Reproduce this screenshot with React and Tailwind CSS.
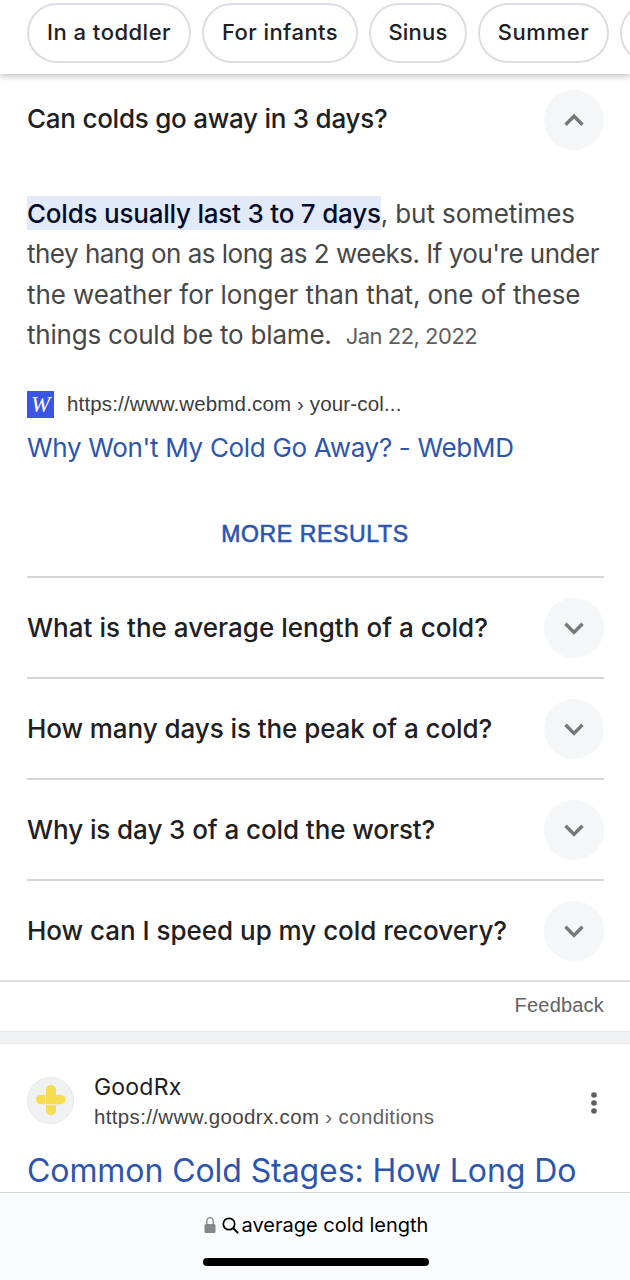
const CHIPS = [
  { label: "In a toddler", box: "w-[164px] tracking-[0.5px]" },
  { label: "For infants", box: "w-[156px] tracking-[0.42px]" },
  { label: "Sinus", box: "w-[98px] tracking-[0.2px]" },
  { label: "Summer", box: "w-[131px] tracking-[0.6px]" },
];

const QUESTIONS = [
  { text: "What is the average length of a cold?", tracking: "tracking-[0.03px]" },
  { text: "How many days is the peak of a cold?", tracking: "tracking-[-0.07px]" },
  { text: "Why is day 3 of a cold the worst?", tracking: "tracking-[-0.08px]" },
  { text: "How can I speed up my cold recovery?", tracking: "tracking-[-0.02px]" },
];

function ChevronButton({ up }) {
  return (
    <button className="flex size-[60px] shrink-0 items-center justify-center rounded-full bg-[#f5f6f8]">
      <svg width="24" height="24" viewBox="0 0 24 24" fill="none" stroke="#77787a" strokeWidth="3.4">
        <path d={up ? "M3.5 16.8 12 8.2l8.5 8.6" : "M3.5 7.8 12 16.4l8.5-8.6"} />
      </svg>
    </button>
  );
}

function Header() {
  return (
    <header className="relative z-10 flex h-[74px] shrink-0 gap-[11px] overflow-x-clip bg-white pt-[3px] pl-[27px] shadow-[0_2px_7px_rgba(0,0,0,0.27)]">
      {CHIPS.map((c) => (
        <div
          key={c.label}
          className={`flex h-[60px] shrink-0 items-center justify-center rounded-full border-2 border-[#dcdce2] pb-px text-[22px] font-medium whitespace-nowrap ${c.box}`}
        >
          {c.label}
        </div>
      ))}
      <div className="h-[60px] w-[120px] shrink-0 rounded-full border-2 border-[#dcdce2]" />
    </header>
  );
}

function Answer() {
  return (
    <section className="flex h-[502px] shrink-0 flex-col px-[27px] pt-[16px]">
      <div className="-mr-px flex h-[60px] items-center justify-between">
        <h2 className="pb-[3px] text-[26px] font-medium tracking-[-0.25px]">Can colds go away in 3 days?</h2>
        <ChevronButton up />
      </div>
      <div className="mt-[44px] text-[26px] leading-[40.4px] whitespace-nowrap text-[#474747]">
        <p className="tracking-[-0.1px]">
          <mark className="bg-[#e2eafa] pt-[2px] pb-[1px] font-medium tracking-[-0.22px] text-[#040c28]">
            Colds usually last 3 to 7 days
          </mark>
          , but sometimes
        </p>
        <p className="tracking-[-0.51px]">they hang on as long as 2 weeks. If you're under</p>
        <p className="tracking-[-0.08px]">the weather for longer than that, one of these</p>
        <p className="tracking-[-0.2px]">
          things could be to blame.
          <span className="ml-[14px] text-[22px] tracking-[-0.5px] text-[#5e5e5e]">Jan 22, 2022</span>
        </p>
      </div>
      <div className="mt-[34px] flex h-[27px] items-center gap-[13px]">
        <div className="flex size-[27px] items-center justify-center bg-[#3b55e6] font-['Liberation_Serif',serif] text-[23px] leading-none text-white italic">
          W
        </div>
        <span className="font-['Liberation_Sans',sans-serif] text-[20.5px] tracking-[0.15px] text-[#3c3c3c]">
          https://www.webmd.com › your-col...
        </span>
      </div>
      <a className="mt-[14px] h-[32px] text-[26px] leading-[32px] tracking-[-0.31px] text-[#2c55b0]">
        Why Won't My Cold Go Away? - WebMD
      </a>
      <a className="mt-[56px] text-center font-['Liberation_Sans',sans-serif] text-[23px] leading-[28px] tracking-[0.65px] text-[#2c55b0] [-webkit-text-stroke:0.6px_#2c55b0]">
        MORE RESULTS
      </a>
    </section>
  );
}

function GoodRxIcon() {
  return (
    <div className="mb-[4px] flex size-[47px] items-center justify-center rounded-full border border-[#e6e8ec] bg-[#f0f1f3]">
      <svg width="32" height="32" viewBox="0 0 32 32" fill="#f6dc50">
        <path d="M11 20.2V6a5 5 0 0 1 10 0v4.9h5a4.65 4.65 0 0 1 0 9.3z" />
        <path d="M10 10.9v9.3H5.6a4.65 4.65 0 0 1 0-9.3z" />
        <path d="M11 21.2h10v5a5 5 0 0 1-10 0z" />
      </svg>
    </div>
  );
}

export default function App() {
  return (
    <div className="flex h-[1280px] w-[630px] flex-col overflow-hidden bg-white font-[Inter,sans-serif] text-[#202022]">
      <Header />
      <Answer />
      <section className="shrink-0">
        {QUESTIONS.map((q) => (
          <div key={q.text} className="mr-[26px] ml-[27px] flex h-[101px] items-center justify-between border-t-2 border-[#d6d6d6] pt-px">
            <h3 className={`pb-[2px] text-[26px] font-medium whitespace-nowrap ${q.tracking}`}>{q.text}</h3>
            <ChevronButton />
          </div>
        ))}
        <div className="flex h-[51px] items-center justify-end border-t-2 border-[#dcdcde] pr-[26px] pb-[4px] font-['Liberation_Sans',sans-serif] text-[20px] tracking-[0.2px] text-[#626262]">
          Feedback
        </div>
      </section>
      <div className="h-[13px] shrink-0 border-y border-[#e8e9ec] bg-[#eff0f2]" />
      <section className="flex h-[148px] shrink-0 flex-col overflow-hidden px-[27px] pt-[29px]">
        <div className="flex h-[58px] items-center">
          <GoodRxIcon />
          <div className="ml-[20px] flex-1">
            <div className="text-[23px] leading-[29px] tracking-[0.2px]">GoodRx</div>
            <div className="mb-px font-['Liberation_Sans',sans-serif] text-[20.5px] leading-[29px] tracking-[0.35px] text-[#444]">
              https://www.goodrx.com <span className="text-[#626262]">› conditions</span>
            </div>
          </div>
          <svg className="mt-[2px] mr-[5px]" width="8" height="24" viewBox="0 0 8 24" fill="#5c5e60">
            <circle cx="4" cy="4" r="2.8" />
            <circle cx="4" cy="12" r="2.8" />
            <circle cx="4" cy="20" r="2.8" />
          </svg>
        </div>
        <a className="mt-[20px] text-[32px] leading-[40px] tracking-[-0.08px] whitespace-nowrap text-[#2c55b0]">Common Cold Stages: How Long Do</a>
      </section>
      <footer className="flex flex-1 flex-col items-center border-t border-[#d4d5d8] bg-[#fbfcfd] pt-[19px] pl-[2px] text-black">
        <div className="flex h-[26px] items-center text-[20px]">
          <svg width="12" height="18" viewBox="0 0 12 18">
            <path d="M2.8 9V5.2a3.2 3.6 0 0 1 6.4 0V9" fill="none" stroke="#85868a" strokeWidth="1.4" />
            <rect x="0.5" y="8" width="11" height="9" rx="1.5" fill="#85868a" />
          </svg>
          <svg className="ml-[6px]" width="17" height="17" viewBox="0 0 17 17" fill="none" stroke="#000" strokeWidth="1.7" strokeLinecap="round">
            <circle cx="7" cy="7" r="5.7" />
            <path d="m11.3 11.3 4.3 4.3" strokeWidth="2" />
          </svg>
          <span className="ml-[3px]">average cold length</span>
        </div>
        <div className="mt-[20px] h-[8px] w-[226px] rounded-full bg-black" />
      </footer>
    </div>
  );
}
